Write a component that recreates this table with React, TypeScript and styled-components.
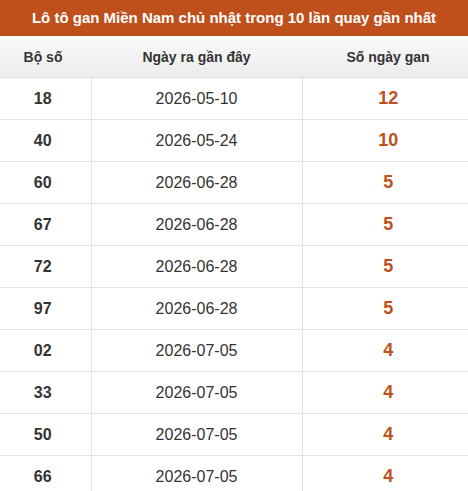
import React from 'react';
import styled, { createGlobalStyle } from 'styled-components';

const rows = [
    { so: '18', ngay: '2026-05-10', gan: 12 },
    { so: '40', ngay: '2026-05-24', gan: 10 },
    { so: '60', ngay: '2026-06-28', gan: 5 },
    { so: '67', ngay: '2026-06-28', gan: 5 },
    { so: '72', ngay: '2026-06-28', gan: 5 },
    { so: '97', ngay: '2026-06-28', gan: 5 },
    { so: '02', ngay: '2026-07-05', gan: 4 },
    { so: '33', ngay: '2026-07-05', gan: 4 },
    { so: '50', ngay: '2026-07-05', gan: 4 },
    { so: '66', ngay: '2026-07-05', gan: 4 },
];

const App = () => {
    return (
        <>
            <GlobalStyle />
            <StWrap>
                <StTitle>Lô tô gan Miền Nam chủ nhật trong 10 lần quay gần nhất</StTitle>
                <StTable>
                    <thead>
                        <tr>
                            <StTh>Bộ số</StTh>
                            <StTh>Ngày ra gần đây</StTh>
                            <StTh>Số ngày gan</StTh>
                        </tr>
                    </thead>
                    <tbody>
                        {rows.map((r) => (
                            <tr key={r.so}>
                                <StNumCell>{r.so}</StNumCell>
                                <StDateCell>{r.ngay}</StDateCell>
                                <StGanCell>{r.gan}</StGanCell>
                            </tr>
                        ))}
                    </tbody>
                </StTable>
            </StWrap>
        </>
    );
};

const GlobalStyle = createGlobalStyle`
    body {
        margin: 0;
        background: #fff;
        font-family: Arial, "Liberation Sans", sans-serif;
        overflow: hidden;
    }
`

const StWrap = styled.div`
    width: 468px;
    overflow: hidden;
`

const StTitle = styled.div`
    height: 36px;
    line-height: 36px;
    background: #c0501b;
    color: #fff;
    font-size: 15px;
    font-weight: bold;
    text-align: center;
    white-space: nowrap;
`

// bảng rộng hơn khung một chút, hai mép bị cắt
const StTable = styled.table`
    width: 479px;
    margin-left: -5px;
    border-collapse: collapse;
    table-layout: fixed;
    color: #333;
`

const StTh = styled.th`
    height: 41px;
    padding: 0;
    font-size: 14px;
    font-weight: bold;
    background: linear-gradient(#fafafa, #ececec);
    border-bottom: 1px solid #ddd;
    &:nth-child(1) { width: 96px; }
    &:nth-child(2) { width: 211px; }
`

const StCell = styled.td`
    height: 41px;
    padding: 0;
    text-align: center;
    border-bottom: 1px solid #e3e3e3;
    border-left: 1px solid #e3e3e3;
    &:first-child { border-left: none; }
`

const StNumCell = styled(StCell)`
    font-size: 16px;
    font-weight: bold;
`

const StDateCell = styled(StCell)`
    font-size: 16px;
`

const StGanCell = styled(StCell)`
    font-size: 18px;
    font-weight: bold;
    color: #c0501b;
`

export default App;
